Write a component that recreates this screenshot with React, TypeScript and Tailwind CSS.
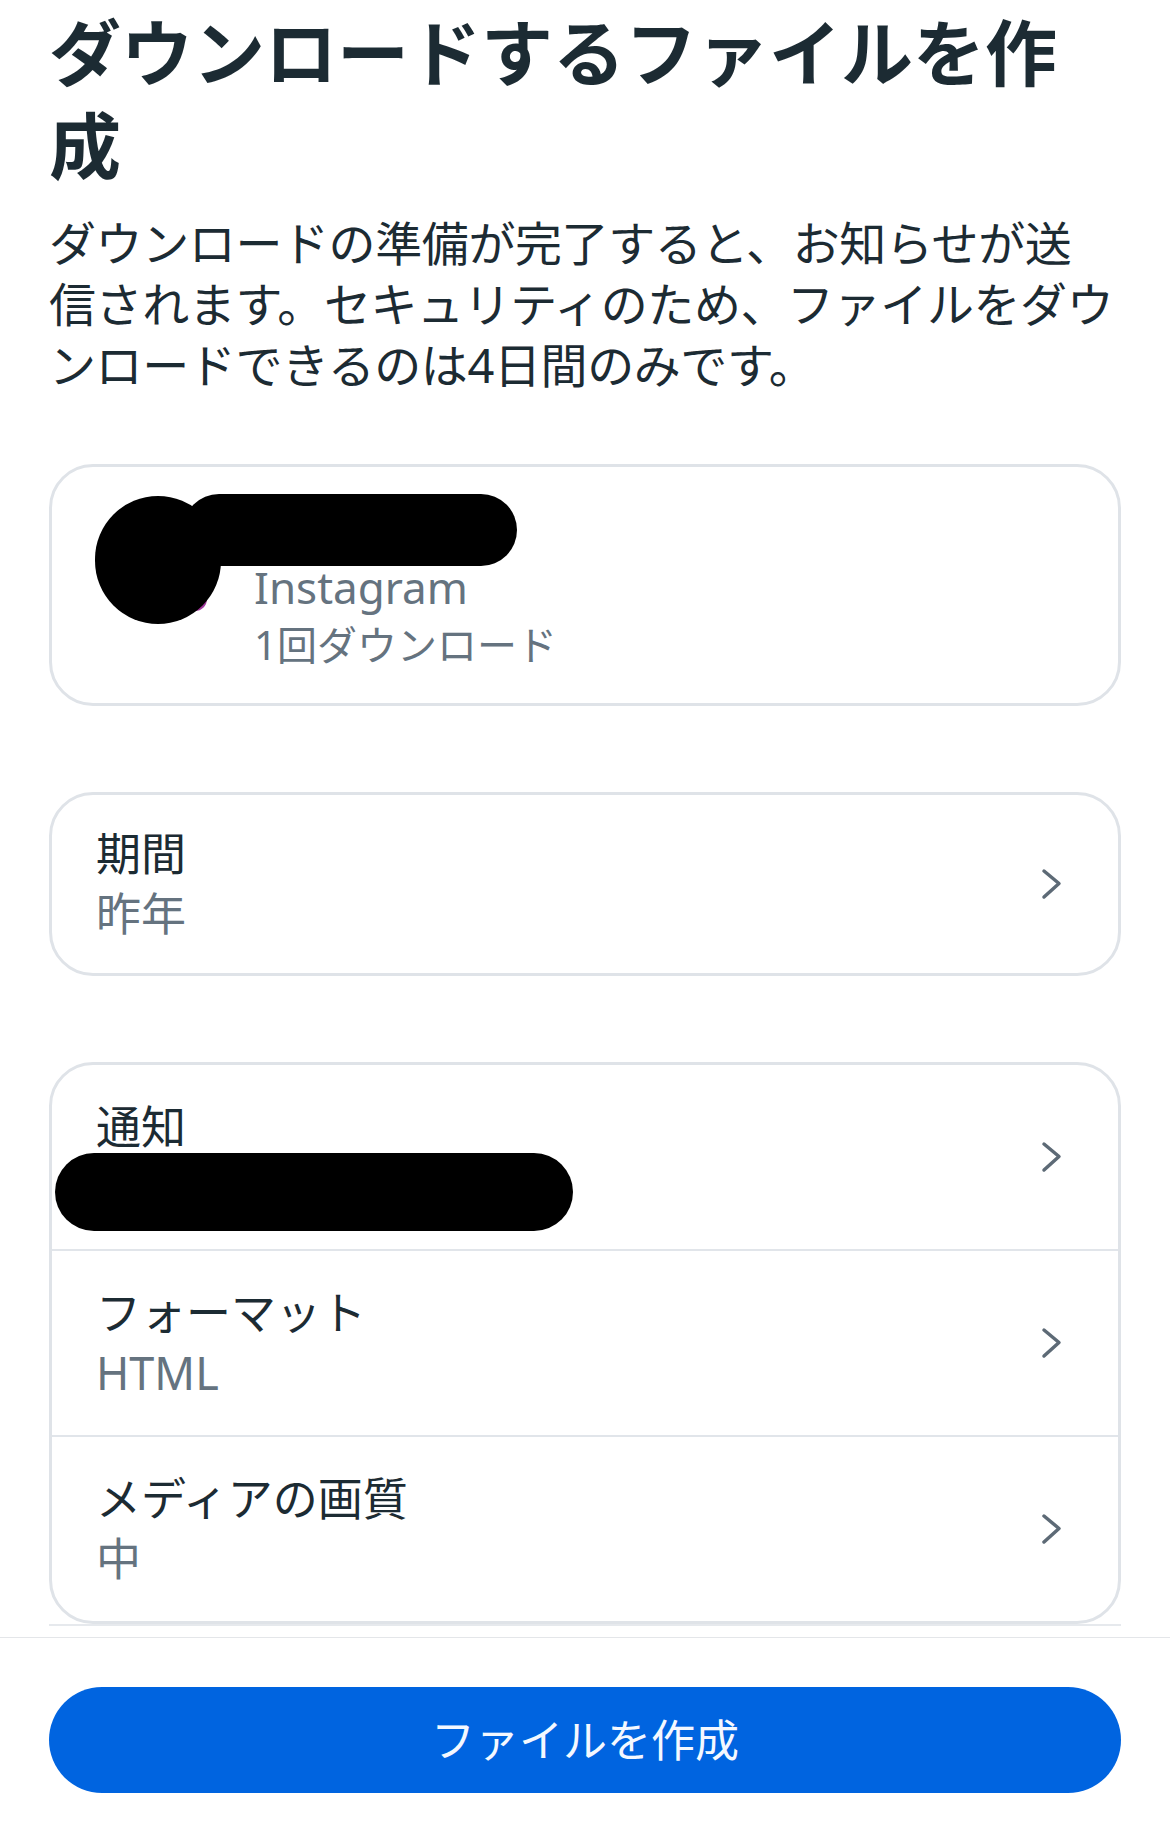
import React from "react"

function Chevron() {
  return (
    <svg width="28" height="36" viewBox="0 0 28 36" fill="none" className="shrink-0">
      <path d="M7 5 L22 17.5 L7 31" stroke="#5d6a76" strokeWidth="3.5" strokeLinecap="round" strokeLinejoin="round" />
    </svg>
  )
}

function SettingRow({ label, value, redacted }: { label: string; value?: string; redacted?: boolean }) {
  return (
    <div className="flex items-center justify-between pl-[44px] pr-[53px] py-[32px]">
      <div className="flex flex-col">
        <div className="text-[45px] leading-[60px] text-[#1c2b33]">{label}</div>
        {redacted ? (
          <div className="relative h-[60px]">
            {/* redacted value */}
            <span className="absolute left-[-41px] top-[-4px] h-[78px] w-[518px] rounded-full bg-black" />
          </div>
        ) : (
          <div className="text-[45px] leading-[60px] text-[#65737f]">{value}</div>
        )}
      </div>
      <Chevron />
    </div>
  )
}

export default function App() {
  const intro = [
    "ダウンロードの準備が完了すると、お知らせが送",
    "信されます。セキュリティのため、ファイルをダウ",
    "ンロードできるのは4日間のみです。",
  ]

  return (
    <div
      className="flex h-[1824px] w-[1170px] flex-col bg-white"
      style={{ fontFamily: "'Noto Sans', 'Noto Sans CJK JP', sans-serif" }}
    >
      <main className="flex-1 overflow-hidden px-[49px] pt-[6px]">
        {/* Heading */}
        <h1 className="max-w-[1050px] text-[72px] font-bold leading-[93px] text-[#1c2b33]">
          ダウンロードするファイルを作成
        </h1>
        <p className="mt-[21px] text-[47px] leading-[61px] tracking-[-0.4px] text-[#1c2b33]">
          {intro.map((line) => (
            <span key={line} className="block whitespace-nowrap">
              {line}
            </span>
          ))}
        </p>

        {/* Account card */}
        <div className="mt-[68px] flex h-[242px] rounded-[44px] border-[3px] border-[#dfe3e8] pl-[43px] pt-[29px]">
          <div className="relative h-[128px] w-[126px] shrink-0">
            <span className="absolute left-[88px] top-[91px] h-[24px] w-[24px] rounded-full bg-gradient-to-br from-[#f58529] via-[#dd2a7b] to-[#8134af]" />
            <div className="absolute inset-0 rounded-full bg-black" />
          </div>
          <div className="ml-[33px] flex flex-col pt-[6px]">
            <div className="relative h-[57px]">
              <span className="absolute left-[-71px] top-[-8px] h-[72px] w-[334px] rounded-full bg-black" />
            </div>
            <div className="text-[44px] leading-[57px] text-[#65737f]">Instagram</div>
            <div className="text-[40px] leading-[57px] text-[#65737f]">1回ダウンロード</div>
          </div>
        </div>

        {/* Date range */}
        <div className="mt-[86px] flex items-center justify-between rounded-[44px] border-[3px] border-[#dfe3e8] pl-[44px] pr-[53px] py-[29px]">
          <div className="flex flex-col">
            <div className="text-[45px] leading-[60px] text-[#1c2b33]">期間</div>
            <div className="text-[45px] leading-[60px] text-[#65737f]">昨年</div>
          </div>
          <Chevron />
        </div>

        {/* Options */}
        <div className="mt-[86px] overflow-hidden rounded-[44px] border-[3px] border-[#dfe3e8]">
          <SettingRow label="通知" redacted />
          <div className="h-[2px] bg-[#e1e5ea]" />
          <SettingRow label="フォーマット" value="HTML" />
          <div className="h-[2px] bg-[#e1e5ea]" />
          <SettingRow label="メディアの画質" value="中" />
        </div>
        <div className="h-[2px] bg-[#e6e9ed]" />
      </main>

      {/* Footer */}
      <footer className="border-t border-[#e4e6e9] px-[49px] pt-[49px] pb-[31px]">
        <button className="flex h-[106px] w-full items-center justify-center rounded-full bg-[#0064e0] text-[44px] text-[#f4f8ff]">
          ファイルを作成
        </button>
      </footer>
    </div>
  )
}
